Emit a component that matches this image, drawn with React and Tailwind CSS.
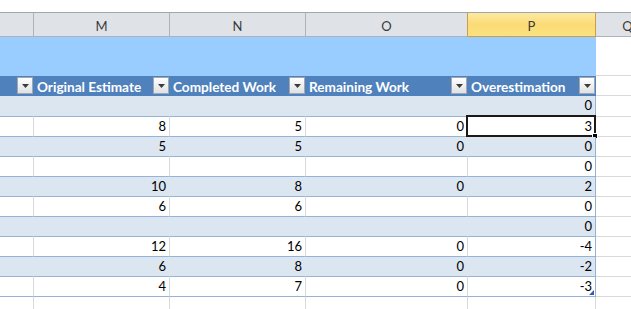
import React from "react";

const widths = ["w-[34px]", "w-[136px]", "w-[136px]", "w-[162px]", "w-[128px]", "w-[64px]"];

const letters = ["", "M", "N", "O", "P", "Q"];

const headers = ["", "Original Estimate", "Completed Work", "Remaining Work", "Overestimation"];

const rows = [
  ["", "", "", "0"],
  ["8", "5", "0", "3"],
  ["5", "5", "0", "0"],
  ["", "", "", "0"],
  ["10", "8", "0", "2"],
  ["6", "6", "", "0"],
  ["", "", "", "0"],
  ["12", "16", "0", "-4"],
  ["6", "8", "0", "-2"],
  ["4", "7", "0", "-3"],
];

function FilterButton() {
  return (
    <div className="flex h-[17px] w-[16px] shrink-0 items-center justify-center border border-[#a3a8ae] bg-linear-to-b from-[#ffffff] to-[#dfe1e4]">
      <svg width="7" height="4" viewBox="0 0 7 4">
        <polygon points="0,0 7,0 3.5,4" fill="#3c3c3c" />
      </svg>
    </div>
  );
}

function ColumnLetters() {
  return (
    <div className="flex h-[24px]">
      {letters.map((l, i) => {
        const active = i === 4;
        let cls =
          "box-border flex h-full shrink-0 items-start justify-center border-b border-r pt-[4px] text-[13px] leading-[18px] text-[#3a3a3a] ";
        if (active) {
          cls += "border-[#c9a049] bg-linear-to-b from-[#fde9a0] via-[#fbdb75] to-[#fbe27f]";
        } else if (i === 3) {
          cls += "border-b-[#aeb3b9] border-r-[#c9a049] bg-[#dfe3e8]";
        } else {
          cls += "border-[#aeb3b9] bg-[#dfe3e8]";
        }
        return (
          <div key={i} className={`${widths[i]} ${cls}`}>
            {l}
          </div>
        );
      })}
    </div>
  );
}

function TitleBand() {
  return (
    <div className="flex h-[39px]">
      {widths.map((w, i) =>
        i < 5 ? (
          <div key={i} className={`${w} h-full shrink-0 bg-[#99ccff]`} />
        ) : (
          <div key={i} className={`${w} box-border h-full shrink-0 border-b border-[#d9d9d9] bg-white`} />
        )
      )}
    </div>
  );
}

function TableHeader() {
  return (
    <div className="flex h-[20px]">
      {widths.map((w, i) =>
        i < 5 ? (
          <div
            key={i}
            className={`${w} flex h-full shrink-0 items-start justify-between bg-[#4f81bd] pl-[3px] pr-[1px] pt-[1px]`}
          >
            <span className="text-[13.6px] font-bold leading-[20px] whitespace-nowrap text-white">{headers[i]}</span>
            <FilterButton />
          </div>
        ) : (
          <div key={i} className={`${w} box-border h-full shrink-0 border-b border-[#d9d9d9] bg-white`} />
        )
      )}
    </div>
  );
}

function DataRow({ values, index }) {
  const band = index % 2 === 0;
  const height = index === 0 ? "h-[21px]" : "h-[20px]";
  return (
    <div className={`flex ${height}`}>
      {widths.map((w, i) => {
        if (i === 5) {
          return <div key={i} className={`${w} box-border h-full shrink-0 border-b border-[#d9d9d9] bg-white`} />;
        }
        const value = i === 0 ? "" : values[i - 1];
        const selected = index === 1 && i === 4;
        const last = index === rows.length - 1 && i === 4;
        let cls = "box-border relative h-full shrink-0 border-b border-r border-b-[#95b3d7] text-right pr-[3px] text-[13px] leading-[19px] text-black ";
        if (i === 4) cls += "border-r-[#95b3d7] ";
        else if (band) cls += "border-r-[#dce6f1] ";
        else cls += "border-r-[#d9d9d9] ";
        cls += band ? "bg-[#dce6f1]" : "bg-white";
        return (
          <div key={i} className={`${w} ${cls}`}>
            {value}
            {selected && (
              <div className="pointer-events-none absolute -top-[2px] -left-[2px] -right-[1px] -bottom-[1px] border-2 border-[#1d1a15]">
                <div className="absolute -right-[4px] -bottom-[4px] h-[6px] w-[6px] border border-white bg-black" />
              </div>
            )}
            {last && (
              <svg className="absolute right-[1px] bottom-[1px]" width="5" height="5" viewBox="0 0 5 5">
                <polygon points="5,0 5,5 0,5" fill="#3d5aa8" />
              </svg>
            )}
          </div>
        );
      })}
    </div>
  );
}

function EmptyRow() {
  return (
    <div className="flex h-[20px]">
      {widths.map((w, i) => (
        <div key={i} className={`${w} box-border h-full shrink-0 border-r border-[#d9d9d9] bg-white`} />
      ))}
    </div>
  );
}

export default function App() {
  return (
    <div className="h-[309px] w-[631px] overflow-hidden bg-white font-['Lato','Noto_Sans',sans-serif]">
      <div className="w-[660px]">
        <div className="h-[12px] bg-white" />
        <div className="h-px bg-[#a0a5ac]" />
        <ColumnLetters />
        <TitleBand />
        <TableHeader />
        {rows.map((r, idx) => (
          <DataRow key={idx} values={r} index={idx} />
        ))}
        <EmptyRow />
      </div>
    </div>
  );
}
